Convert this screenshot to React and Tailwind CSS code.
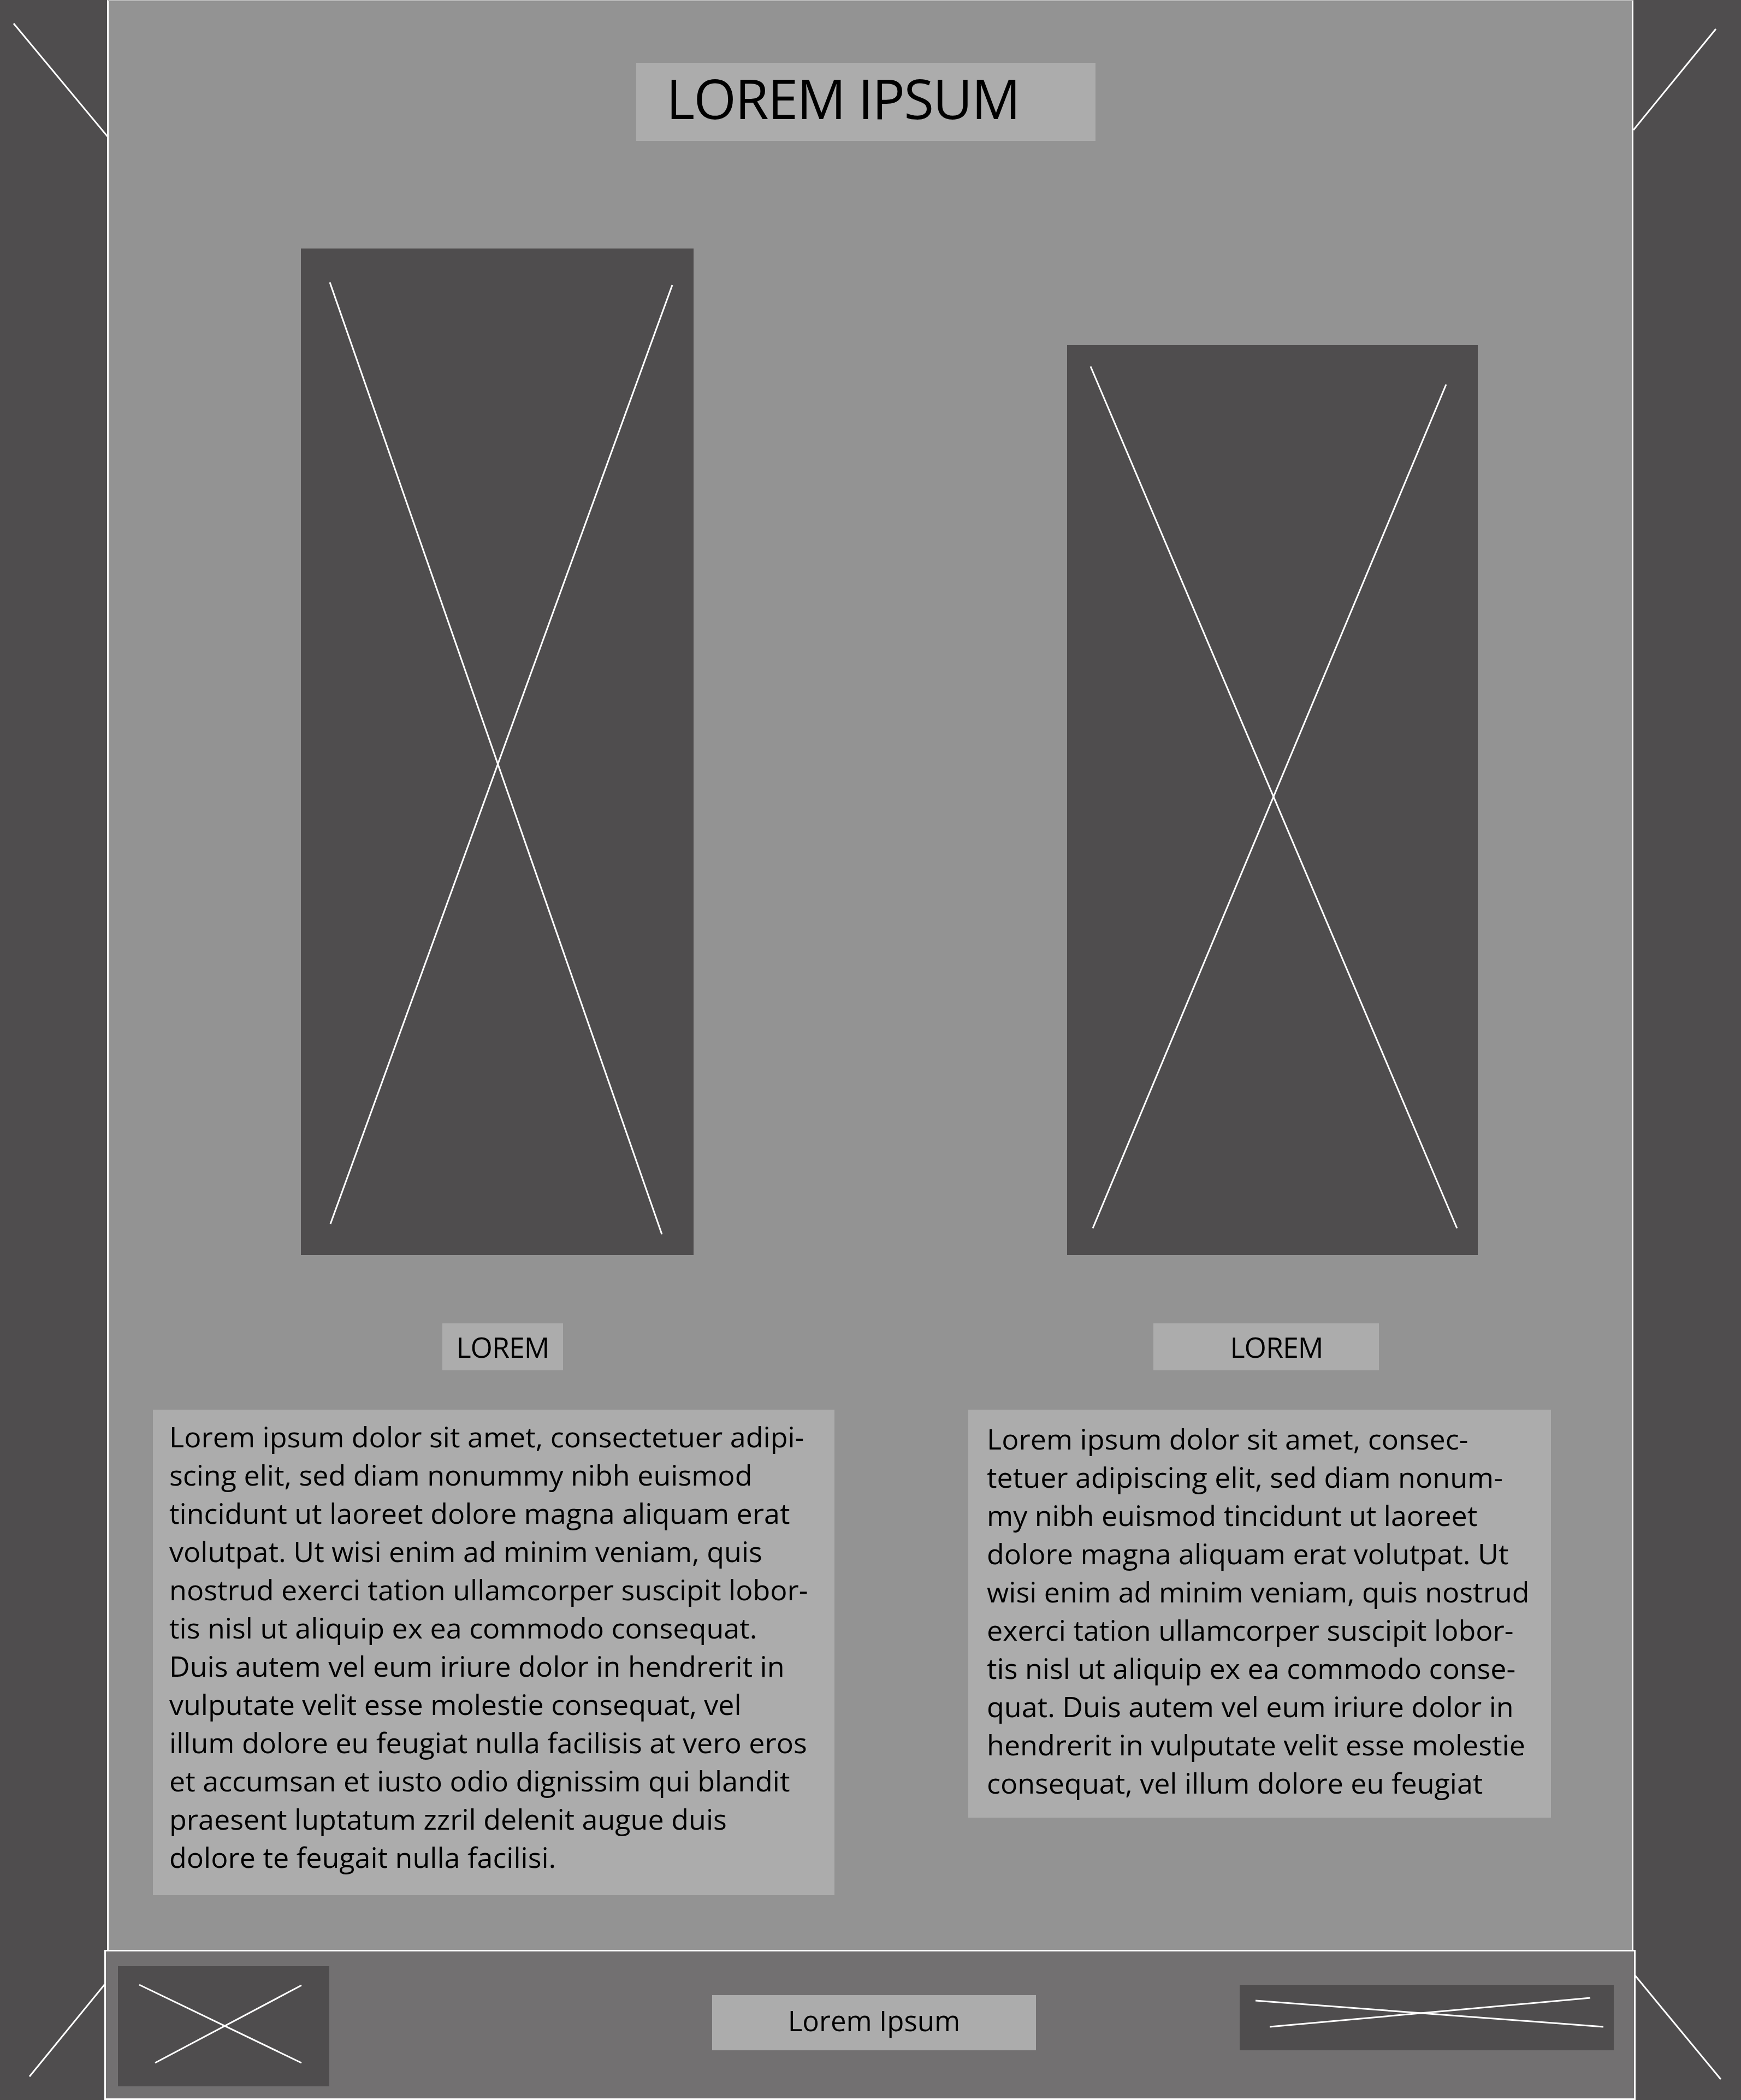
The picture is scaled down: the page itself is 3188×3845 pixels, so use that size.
import React from "react";

const FONT = { fontFamily: '"Open Sans", "Noto Sans", sans-serif' };

const leftLines = [
  "Lorem ipsum dolor sit amet, consectetuer adipi-",
  "scing elit, sed diam nonummy nibh euismod",
  "tincidunt ut laoreet dolore magna aliquam erat",
  "volutpat. Ut wisi enim ad minim veniam, quis",
  "nostrud exerci tation ullamcorper suscipit lobor-",
  "tis nisl ut aliquip ex ea commodo consequat.",
  "Duis autem vel eum iriure dolor in hendrerit in",
  "vulputate velit esse molestie consequat, vel",
  "illum dolore eu feugiat nulla facilisis at vero eros",
  "et accumsan et iusto odio dignissim qui blandit",
  "praesent luptatum zzril delenit augue duis",
  "dolore te feugait nulla facilisi.",
];

const rightLines = [
  "Lorem ipsum dolor sit amet, consec-",
  "tetuer adipiscing elit, sed diam nonum-",
  "my nibh euismod tincidunt ut laoreet",
  "dolore magna aliquam erat volutpat. Ut",
  "wisi enim ad minim veniam, quis nostrud",
  "exerci tation ullamcorper suscipit lobor-",
  "tis nisl ut aliquip ex ea commodo conse-",
  "quat. Duis autem vel eum iriure dolor in",
  "hendrerit in vulputate velit esse molestie",
  "consequat, vel illum dolore eu feugiat",
];

function Cross({ w, h, lines }) {
  return (
    <svg width={w} height={h} viewBox={`0 0 ${w} ${h}`} className="block">
      {lines.map((l, i) => (
        <line key={i} x1={l[0]} y1={l[1]} x2={l[2]} y2={l[3]} stroke="#ffffff" strokeWidth="3" />
      ))}
    </svg>
  );
}

export default function App() {
  return (
    <div className="w-[3188px] h-[3845px] bg-[#4f4d4e] flex flex-col overflow-hidden" style={FONT}>
      {/* top area */}
      <div className="flex h-[3570px] shrink-0">
        <div className="w-[196px] shrink-0">
          <Cross w={196} h={300} lines={[[25, 43, 197, 250]]} />
        </div>
        <div className="w-[2795px] shrink-0 bg-[#939393] border-x-[3px] border-white border-t-[2px] border-t-[#b8b8b8] flex flex-col">
          {/* title */}
          <div className="ml-[966px] mt-[113px] w-[841px] h-[143px] bg-[#acacac] pl-[55px] pt-[14px]">
            <div className="text-[100px] leading-none tracking-[-0.02em] text-black whitespace-nowrap">LOREM IPSUM</div>
          </div>
          {/* images */}
          <div className="flex items-end mt-[197px]">
            <div className="ml-[352px] w-[719px] h-[1843px] bg-[#4f4d4e]">
              <Cross w={719} h={1843} lines={[[53, 62, 661, 1805], [680, 67, 54, 1786]]} />
            </div>
            <div className="ml-[684px] w-[752px] h-[1666px] bg-[#4f4d4e]">
              <Cross w={752} h={1666} lines={[[43, 39, 714, 1617], [694, 72, 47, 1617]]} />
            </div>
          </div>
          {/* labels */}
          <div className="flex mt-[125px]">
            <div className="ml-[611px] w-[221px] h-[86px] bg-[#acacac] flex items-center justify-center">
              <span className="text-[52px] leading-none tracking-[-0.02em] text-black">LOREM</span>
            </div>
            <div className="ml-[1081px] w-[413px] h-[86px] bg-[#acacac] flex items-center justify-center pl-[38px]">
              <span className="text-[52px] leading-none tracking-[-0.02em] text-black">LOREM</span>
            </div>
          </div>
          {/* text boxes */}
          <div className="flex items-start mt-[72px]">
            <div className="ml-[81px] w-[1248px] h-[889px] bg-[#acacac] pl-[30px] pt-[14px] text-black text-[52px] leading-[70px]">
              {leftLines.map((l, i) => (
                <div key={i} className="whitespace-nowrap">{l}</div>
              ))}
            </div>
            <div className="ml-[245px] w-[1067px] h-[747px] bg-[#acacac] pl-[34px] pt-[18px] text-black text-[52px] leading-[70px]">
              {rightLines.map((l, i) => (
                <div key={i} className="whitespace-nowrap">{l}</div>
              ))}
            </div>
          </div>
        </div>
        <div className="flex-1">
          <Cross w={197} h={300} lines={[[0, 238, 151, 53]]} />
        </div>
      </div>
      {/* footer row */}
      <div className="flex flex-1">
        <div className="w-[191px] shrink-0">
          <Cross w={191} h={275} lines={[[54, 232, 192, 63]]} />
        </div>
        <div className="w-[2804px] shrink-0 bg-[#727071] border-[3px] border-white flex items-start">
          <div className="ml-[22px] mt-[27px] w-[387px] h-[220px] bg-[#4f4d4e]">
            <Cross w={387} h={220} lines={[[39, 34, 336, 177], [68, 177, 336, 35]]} />
          </div>
          <div className="ml-[701px] mt-[80px] w-[593px] h-[101px] bg-[#acacac] flex items-center justify-center pb-[8px]">
            <span className="text-[51px] leading-none text-black">Lorem Ipsum</span>
          </div>
          <div className="ml-[373px] mt-[61px] w-[685px] h-[120px] bg-[#4f4d4e]">
            <Cross w={685} h={120} lines={[[29, 29, 666, 77], [55, 77, 642, 24]]} />
          </div>
        </div>
        <div className="flex-1">
          <Cross w={193} h={275} lines={[[-1, 47, 156, 237]]} />
        </div>
      </div>
    </div>
  );
}
